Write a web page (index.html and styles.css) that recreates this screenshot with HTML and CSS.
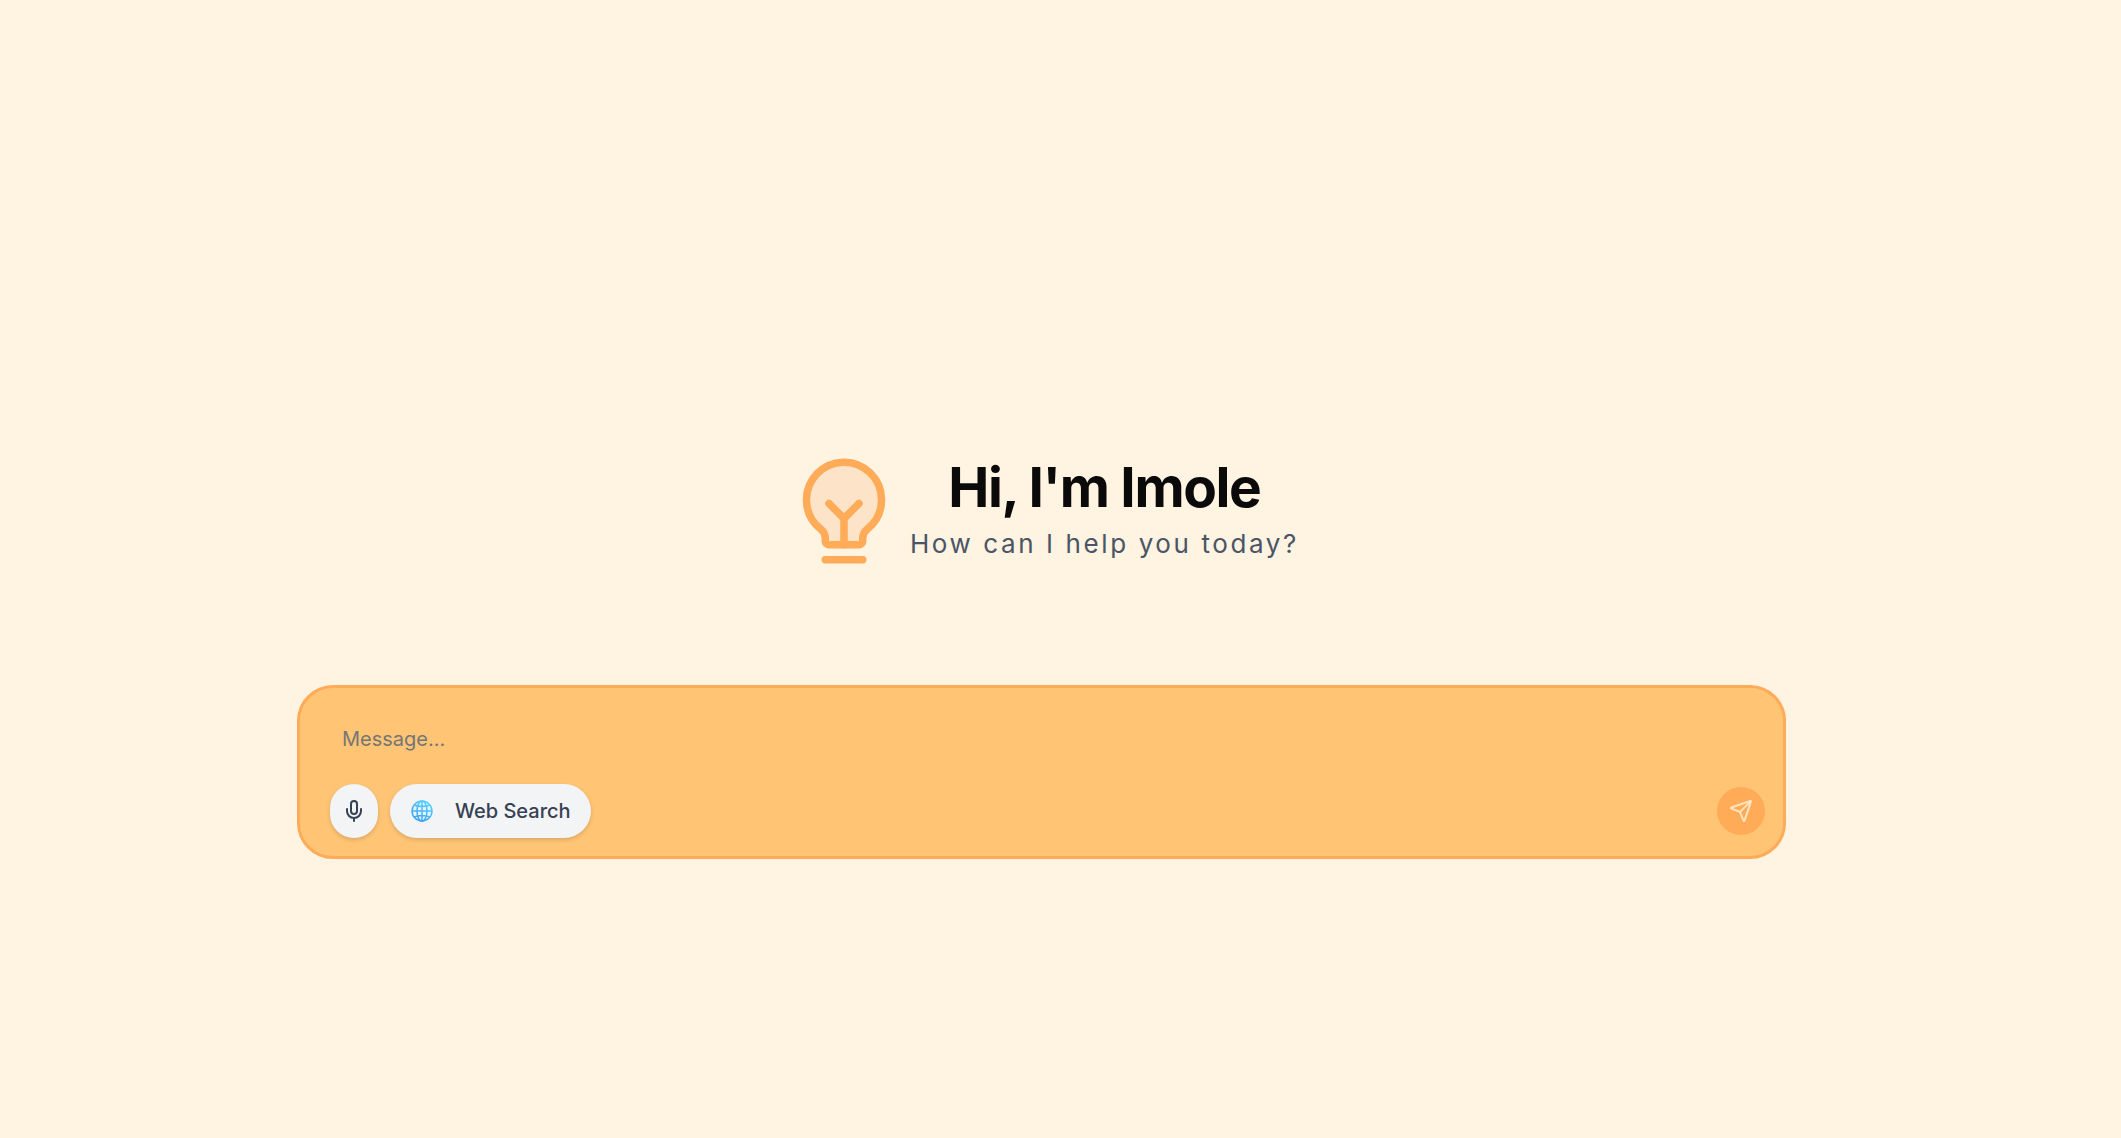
FILE: index.html
```html
<!DOCTYPE html>
<html lang="en">
<head>
  <meta charset="utf-8">
  <meta name="viewport" content="width=device-width, initial-scale=1">
  <title>Imole</title>
  <link rel="stylesheet" href="styles.css">
</head>
<body>
  <main class="chat">
    <header class="greeting">
      <svg class="bulb" viewBox="0 0 256 256" fill="none" stroke="currentColor" stroke-width="16" stroke-linecap="round" stroke-linejoin="round" aria-hidden="true">
        <path class="bulb-glass" d="M208,104a79.86,79.86,0,0,1-30.59,62.92A24.29,24.29,0,0,0,168,186v6a8,8,0,0,1-8,8H96a8,8,0,0,1-8-8v-6a24.11,24.11,0,0,0-9.3-19A79.87,79.87,0,0,1,48,104.45C47.76,61.09,82.72,25,126.07,24A80,80,0,0,1,208,104Z"/>
        <path d="M88 232h80M128 200v-56M96 112l32 32 32-32"/>
      </svg>
      <div class="greeting-text">
        <h1 class="title">Hi, I'm Imole</h1>
        <p class="subtitle">How can I help you today?</p>
      </div>
    </header>
    <form class="composer">
      <input class="message" type="text" placeholder="Message..." aria-label="Message">
      <div class="actions">
        <button class="pill mic" type="button" aria-label="Record voice">
          <svg class="icon" viewBox="0 0 24 24" fill="none" stroke="currentColor" stroke-width="2" stroke-linecap="round" stroke-linejoin="round" aria-hidden="true">
            <path d="M12 2a3 3 0 0 0-3 3v7a3 3 0 0 0 6 0V5a3 3 0 0 0-3-3Z"/>
            <path d="M19 10v2a7 7 0 0 1-14 0v-2M12 19v3"/>
          </svg>
        </button>
        <button class="pill search" type="button">
          <svg class="icon" viewBox="0 0 24 24" fill="none" stroke="url(#sky)" stroke-width="1.5" aria-hidden="true">
            <defs>
              <linearGradient id="sky" gradientUnits="userSpaceOnUse" x1="18" y1="2" x2="6" y2="22">
                <stop offset="0" stop-color="#5cd4ff"/>
                <stop offset="1" stop-color="#3b9cf2"/>
              </linearGradient>
            </defs>
            <circle cx="12" cy="12" r="10" fill="#e4f4ff"/>
            <ellipse cx="12" cy="12" rx="5" ry="10"/>
            <path d="M12 2v20M2 12h20M4 6q8 3 16 0M4 18q8-3 16 0"/>
          </svg>
          <span>Web Search</span>
        </button>
        <button class="send" type="submit" aria-label="Send message">
          <svg class="icon" viewBox="0 0 24 24" fill="none" stroke="currentColor" stroke-width="2" stroke-linecap="round" stroke-linejoin="round" aria-hidden="true">
            <path d="M14.536 21.686a.5.5 0 0 0 .937-.024l6.5-19a.496.496 0 0 0-.635-.635l-19 6.5a.5.5 0 0 0-.024.937l7.93 3.18a2 2 0 0 1 1.112 1.11z"/>
            <path d="m21.854 2.147-10.94 10.939"/>
          </svg>
        </button>
      </div>
    </form>
  </main>
</body>
</html>
```
FILE: styles.css
```css
* {
  box-sizing: border-box;
}

body {
  margin: 0;
  background: #fff3e1;
  color: #0a0a0a;
  font-family: Inter, "Liberation Sans", sans-serif;
}

.chat {
  min-height: 100vh;
  padding: 172px 15.8% 0 14%;
  display: flex;
  flex-direction: column;
  justify-content: center;
  gap: 114px;
}

.greeting {
  display: flex;
  justify-content: center;
  align-items: center;
  gap: 6px;
}

.bulb {
  width: 120px;
  height: 120px;
  flex: none;
  color: #ffab57;
}

.bulb-glass {
  fill: #fde4c8;
}

.greeting-text {
  text-align: center;
}

.title {
  margin: 0;
  font-size: 55px;
  line-height: 60px;
  font-weight: 700;
  letter-spacing: -0.025em;
}

.subtitle {
  margin: 6px 0 0;
  font-size: 26px;
  line-height: 42px;
  letter-spacing: 0.1em;
  color: #4a5565;
}

.composer {
  padding: 24px 18px 18px 30px;
  border: 3px solid #ffab57;
  border-radius: 36px;
  background: #ffc575;
}

.message {
  display: block;
  width: 100%;
  height: 54px;
  padding: 0 12px;
  border: 0;
  background: none;
  font: inherit;
  font-size: 20px;
}

.message::placeholder {
  color: #757575;
}

.actions {
  display: flex;
  align-items: center;
  gap: 12px;
  margin-top: 18px;
}

.pill,
.send {
  display: flex;
  align-items: center;
  justify-content: center;
  padding: 0;
  border: 0;
  font: inherit;
}

.pill {
  height: 54px;
  border-radius: 27px;
  background: #f3f4f6;
  color: #364153;
  box-shadow: 0 2px 4px rgb(0 0 0 / 15%);
}

.mic {
  width: 48px;
  border-radius: 24px;
}

.search {
  padding: 0 20px;
  gap: 21px;
  font-size: 20px;
  font-weight: 500;
}

.send {
  width: 48px;
  height: 48px;
  margin-left: auto;
  border-radius: 50%;
  background: #ffab57;
  color: #ffe3bd;
}

.icon {
  width: 24px;
  height: 24px;
  flex: none;
}
```
